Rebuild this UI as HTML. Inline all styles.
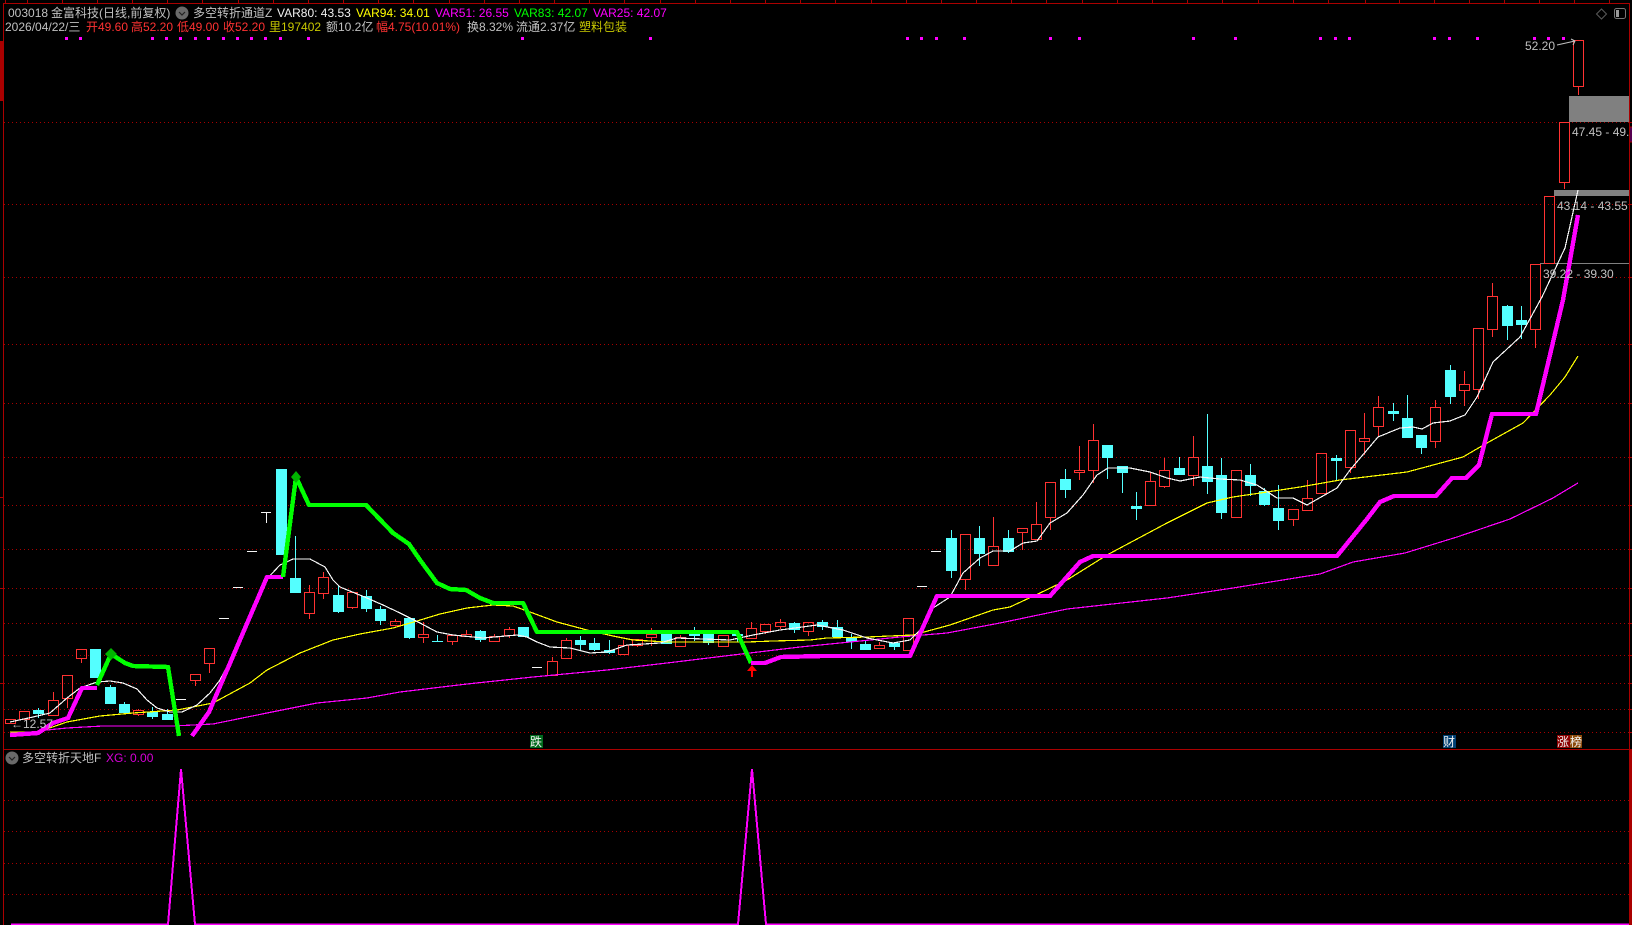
<!DOCTYPE html>
<html><head><meta charset="utf-8"><title>003018</title>
<style>
html,body{margin:0;padding:0;background:#000;overflow:hidden}
svg{display:block}
text{font-family:"Liberation Sans","WenQuanYi Zen Hei","Noto Sans CJK SC",sans-serif;font-size:12px;fill:#c0c0c0;white-space:pre}
.r{fill:#ff3232}.y{fill:#ffff00}.o{fill:#c8c800}.m{fill:#ff00ff}.g{fill:#00ff00}.w{fill:#f0f0f0}
</style></head><body>
<svg width="1632" height="925" viewBox="0 0 1632 925" xmlns="http://www.w3.org/2000/svg">
<rect width="1632" height="925" fill="#000"/>
<!-- grid -->
<path fill="none" stroke="#a80000" stroke-width="1" stroke-dasharray="1 3" shape-rendering="crispEdges" d="M4 122.5H1629M4 204.5H1629M4 277.5H1629M4 344.5H1629M4 403.5H1629M4 457.5H1629M4 505.5H1629M4 549.5H1629M4 588.5H1629M4 623.5H1629M4 655.5H1629M4 683.5H1629M4 709.5H1629M4 732.5H1629M4 800.5H1629M4 831.5H1629M4 863.5H1629M4 894.5H1629"/>
<!-- frame -->
<g fill="#aa0000" shape-rendering="crispEdges">
<rect x="3" y="3" width="1627" height="1"/>
<rect x="3" y="3" width="1" height="922"/>
<rect x="0" y="41" width="3" height="60"/>
<rect x="1629" y="3" width="1" height="746"/>
<rect x="1629" y="749" width="3" height="176"/>
<rect x="3" y="749" width="1629" height="1"/>
<rect x="1630" y="122" width="2" height="1"/><rect x="1630" y="204" width="2" height="1"/><rect x="1630" y="277" width="2" height="1"/><rect x="1630" y="344" width="2" height="1"/><rect x="1630" y="403" width="2" height="1"/><rect x="1630" y="457" width="2" height="1"/><rect x="1630" y="505" width="2" height="1"/><rect x="1630" y="549" width="2" height="1"/><rect x="1630" y="588" width="2" height="1"/><rect x="1630" y="623" width="2" height="1"/><rect x="1630" y="655" width="2" height="1"/><rect x="1630" y="683" width="2" height="1"/><rect x="1630" y="709" width="2" height="1"/><rect x="1630" y="732" width="2" height="1"/>
<rect x="0" y="497" width="3" height="1"/><rect x="0" y="588" width="3" height="1"/><rect x="0" y="683" width="3" height="1"/>
</g>
<path stroke="#aa0000" fill="none" shape-rendering="crispEdges" d="M5.5 0V3M27.5 0V3M62.5 0V3M97.5 0V3M132.5 0V3M167.5 0V3M202.5 0V3M238.5 0V3M273.5 0V3M308.5 0V3M343.5 0V3M378.5 0V3M413.5 0V3M449.5 0V3M484.5 0V3M519.5 0V3M554.5 0V3M589.5 0V3M624.5 0V3M660.5 0V3M695.5 0V3M730.5 0V3M765.5 0V3M800.5 0V3M835.5 0V3M871.5 0V3M906.5 0V3M941.5 0V3M976.5 0V3M1011.5 0V3M1046.5 0V3M1082.5 0V3M1117.5 0V3M1152.5 0V3M1187.5 0V3M1222.5 0V3M1258.5 0V3M1293.5 0V3M1328.5 0V3M1365.5 0V3M1399.5 0V3M1434.5 0V3M1469.5 0V3M1504.5 0V3M1539.5 0V3M1574.5 0V3M1609.5 0V3"/>
<rect x="1630" y="127" width="2" height="15" fill="#0000a0" stroke="#aa0000" stroke-width="1"/>
<!-- signal dots -->
<path fill="#ff00ff" shape-rendering="crispEdges" d="M65 37h3v3h-3zM79 37h3v3h-3zM151 37h3v3h-3zM165 37h3v3h-3zM179 37h3v3h-3zM194 37h3v3h-3zM207 37h3v3h-3zM222 37h3v3h-3zM236 37h3v3h-3zM250 37h3v3h-3zM264 37h3v3h-3zM279 37h3v3h-3zM307 37h3v3h-3zM521 37h3v3h-3zM649 37h3v3h-3zM906 37h3v3h-3zM920 37h3v3h-3zM935 37h3v3h-3zM963 37h3v3h-3zM1049 37h3v3h-3zM1078 37h3v3h-3zM1192 37h3v3h-3zM1234 37h3v3h-3zM1319 37h3v3h-3zM1334 37h3v3h-3zM1348 37h3v3h-3zM1433 37h3v3h-3zM1448 37h3v3h-3zM1476 37h3v3h-3zM1533 37h3v3h-3zM1547 37h3v3h-3zM1562 37h3v3h-3z"/>
<!-- gray zones -->
<g shape-rendering="crispEdges">
<rect x="1569" y="96" width="60" height="26" fill="#808080"/>
<rect x="1554" y="190" width="75" height="6" fill="#808080"/>
<rect x="1540" y="263" width="89" height="1" fill="#808080"/>
</g>
<!-- candles: cyan -->
<g shape-rendering="crispEdges">
<path fill="none" stroke="#54ffff" d="M38.5 708V718M110.5 685V690M124.5 702V714M152.5 707V719M167.5 709V716M295.5 536V580M338.5 586V613M366.5 590V612M380.5 606V625M409.5 620V639M437.5 635V642M432 641.5H443M480.5 630V642M580.5 636V650M594.5 638V651M609.5 640V654M694.5 627V641M708.5 640V645M737.5 634V642M794.5 622V633M822.5 620V630M837.5 620V630M851.5 634V649M865.5 641V646M894.5 642V650M951.5 530V578M979.5 526V566M1008.5 530V553M1065.5 469V498M1107.5 450V479M1122.5 470V493M1136.5 492V520M1179.5 457V470M1207.5 414V494M1221.5 458V519M1250.5 464V496M1264.5 488V506M1278.5 485V530M1336.5 455V480M1393.5 403V421M1407.5 395V420M1421.5 440V454M1450.5 365V404M1507.5 305V340M1521.5 306V339"/>
<path fill="#54ffff" d="M33 710h11v4h-11zM90 649h11v29h-11zM105 687h11v17h-11zM119 704h11v9h-11zM147 712h11v5h-11zM162 714h11v6h-11zM276 469h11v86h-11zM290 578h11v15h-11zM333 595h11v17h-11zM361 596h11v13h-11zM375 609h11v12h-11zM404 618h11v20h-11zM475 631h11v9h-11zM518 627h11v10h-11zM575 640h11v5h-11zM589 643h11v7h-11zM604 650h11v3h-11zM661 634h11v10h-11zM689 634h11v2h-11zM703 634h11v9h-11zM732 634h11v2h-11zM789 623h11v7h-11zM817 622h11v5h-11zM832 627h11v10h-11zM846 638h11v4h-11zM860 644h11v6h-11zM889 643h11v4h-11zM946 538h11v33h-11zM974 538h11v16h-11zM1003 538h11v14h-11zM1060 479h11v11h-11zM1102 445h11v13h-11zM1117 466h11v7h-11zM1131 506h11v3h-11zM1174 468h11v7h-11zM1202 466h11v16h-11zM1216 475h11v38h-11zM1245 475h11v11h-11zM1259 491h11v14h-11zM1273 508h11v13h-11zM1331 458h11v3h-11zM1388 411h11v3h-11zM1402 418h11v20h-11zM1416 435h11v13h-11zM1445 370h11v27h-11zM1502 306h11v20h-11zM1516 320h11v5h-11z"/>
<!-- candles: red -->
<path fill="none" stroke="#ff3232" d="M5.5 719.5h10V723.5h-10zM19.5 711.5h10V719.5h-10zM48.5 700.5h10V715.5h-10zM53.5 692V700M62.5 675.5h10V698.5h-10zM67.5 699V708M76.5 649.5h10V658.5h-10zM81.5 659V663M133.5 710.5h10V714.5h-10zM138.5 709V710M138.5 715V716M190.5 674.5h10V680.5h-10zM195.5 681V686M204.5 648.5h10V663.5h-10zM209.5 664V673M304.5 592.5h10V613.5h-10zM309.5 585V592M309.5 614V619M318.5 577.5h10V593.5h-10zM323.5 572V577M323.5 594V599M347.5 592.5h10V607.5h-10zM352.5 608V609M390.5 621.5h10V625.5h-10zM395.5 619V621M418.5 634.5h10V637.5h-10zM423.5 622V634M423.5 638V643M447.5 635.5h10V641.5h-10zM452.5 642V645M461.5 634.5h10V636.5h-10zM466.5 630V634M489.5 636.5h10V641.5h-10zM494.5 634V636M504.5 629.5h10V635.5h-10zM509.5 627V629M509.5 636V638M547.5 661.5h10V675.5h-10zM552.5 657V661M561.5 640.5h10V658.5h-10zM566.5 638V640M618.5 645.5h10V654.5h-10zM623.5 640V645M632.5 639.5h10V645.5h-10zM637.5 646V647M646.5 634.5h10V637.5h-10zM651.5 628V634M651.5 638V646M675.5 637.5h10V646.5h-10zM680.5 635V637M718.5 635.5h10V646.5h-10zM746.5 628.5h10V638.5h-10zM751.5 622V628M760.5 624.5h10V631.5h-10zM765.5 632V634M775.5 622.5h10V626.5h-10zM780.5 619V622M780.5 627V629M803.5 622.5h10V631.5h-10zM808.5 632V636M874.5 645.5h10V648.5h-10zM879.5 642V645M903.5 618.5h10V650.5h-10zM960.5 534.5h10V579.5h-10zM965.5 580V590M988.5 546.5h10V565.5h-10zM993.5 517V546M1017.5 528.5h10V532.5h-10zM1022.5 533V550M1031.5 524.5h10V539.5h-10zM1036.5 502V524M1045.5 482.5h10V517.5h-10zM1050.5 518V530M1074.5 470.5h10V472.5h-10zM1079.5 446V470M1079.5 473V480M1088.5 440.5h10V470.5h-10zM1093.5 424V440M1093.5 471V483M1145.5 481.5h10V505.5h-10zM1150.5 472V481M1159.5 470.5h10V486.5h-10zM1164.5 458V470M1164.5 487V488M1188.5 457.5h10V475.5h-10zM1193.5 436V457M1193.5 476V486M1231.5 470.5h10V517.5h-10zM1288.5 509.5h10V519.5h-10zM1293.5 520V526M1302.5 498.5h10V510.5h-10zM1307.5 480V498M1316.5 453.5h10V493.5h-10zM1345.5 430.5h10V467.5h-10zM1350.5 468V473M1359.5 438.5h10V441.5h-10zM1364.5 413V438M1364.5 442V455M1373.5 407.5h10V426.5h-10zM1378.5 396V407M1378.5 427V437M1430.5 407.5h10V441.5h-10zM1435.5 400V407M1435.5 442V448M1459.5 384.5h10V390.5h-10zM1464.5 371V384M1464.5 391V406M1473.5 328.5h10V389.5h-10zM1478.5 390V399M1487.5 296.5h10V329.5h-10zM1492.5 283V296M1492.5 330V337M1530.5 264.5h10V329.5h-10zM1535.5 330V348M1544.5 196.5h10V263.5h-10zM1559.5 122.5h10V182.5h-10zM1564.5 183V189M1573.5 40.5h10V86.5h-10zM1578.5 87V95"/>
<!-- white doji dashes -->
<path fill="none" stroke="#f4f4f4" d="M176 699.5H186M219 618.5H229M233 587.5H243M247 551.5H257M261 512.5H271M266.5 512V523M532 667.5H542M917 586.5H927M931 551.5H941"/>
</g>
<!-- moving averages -->
<g fill="none" stroke-width="1.2" shape-rendering="crispEdges">
<polyline stroke="#ff00ff" points="37,731 67,728 103,726 173,726 213,724 267,713 317,703 367,698 400,692 467,684 533,677 607,670 667,663 733,655 800,647 900,637 947,633 1000,623 1067,609 1167,598 1233,588 1320,574 1353,562 1405,553 1457,537 1510,519 1553,498 1578,483"/>
<polyline stroke="#ffff00" points="10,732 38,732 67,722 100,716 133,713 177,710 213,703 250,683 267,670 300,653 333,640 360,634 393,628 417,621 440,614 467,608 493,605 513,606 530,612 557,622 587,630 613,636 633,640 667,642 747,642 773,641 810,640 827,638 867,637 913,635 950,625 993,610 1010,607 1040,593 1067,580 1107,555 1167,523 1207,503 1233,497 1267,492 1300,487 1340,480 1407,472 1463,457 1487,443 1523,423 1550,395 1565,377 1578,356"/>
<polyline stroke="#f4f4f4" points="10,722 33,717 50,713 67,698 80,688 97,682 110,681 123,683 137,689 147,700 157,708 170,712 182,712 197,705 210,693 220,680 237,647 250,620 263,583 280,565 293,559 310,559 325,567 333,580 340,587 367,598 383,605 400,613 420,623 437,632 453,635 483,638 517,635 527,637 537,642 550,647 570,648 590,653 607,652 627,645 660,643 677,638 730,640 753,635 780,630 817,625 843,630 867,638 893,643 910,640 920,630 933,608 950,597 963,573 980,558 993,551 1010,551 1023,543 1037,541 1050,523 1067,513 1083,495 1097,475 1108,468 1130,468 1150,472 1167,478 1180,481 1200,477 1220,479 1240,480 1257,485 1277,498 1293,498 1307,505 1337,488 1350,470 1378,437 1400,428 1413,427 1422,429 1433,423 1450,421 1465,415 1477,397 1493,362 1520,337 1542,297 1565,248 1578,190"/>
</g>
<!-- thick trend lines -->
<g fill="none" stroke-width="4.4" stroke-linejoin="round" shape-rendering="crispEdges">
<polyline stroke="#ff00ff" points="10,735 38,733 53,723 68,718 82,688 97,688"/>
<polyline stroke="#00ff00" points="97,685 111,654 125,663 133,666 168,667 179,736"/>
<polyline stroke="#ff00ff" points="192,736 209,712 267,577 283,577"/>
<polyline stroke="#00ff00" points="283,577 296,477 309,505 366,505 393,533 409,544 420,560 437,583 450,589 466,590 480,598 493,603 523,603 537,632 737,632 751,663"/>
<polyline stroke="#ff00ff" points="751,663 765,663 781,657 822,656 910,656 937,596 1050,596 1080,562 1093,556 1337,556 1367,519 1380,502 1394,496 1436,496 1452,478 1466,478 1479,465 1492,414 1536,414 1563,300 1578,215"/>
</g>
<path fill="#00b400" d="M111 648l6 6-6 6-6-6zM296 471l5 6-5 6-5-6z"/>
<!-- red arrow -->
<path fill="#ff0000" d="M752 665l5 6h-4v6h-2v-6h-4z"/>
<!-- labels -->
<text x="11" y="728">←12.57</text>
<path fill="none" stroke="#c0c0c0" d="M1557 45L1575 41M1571 39l4 2-2 4"/>
<text x="1525" y="50">52.20</text>
<text x="1572" y="136">47.45 - 49.</text>
<text x="1557" y="210">43.14 - 43.55</text>
<text x="1543" y="278">39.22 - 39.30</text>
<!-- tags -->
<g shape-rendering="crispEdges">
<rect x="530" y="735" width="13" height="13" fill="#006a1c"/>
<rect x="1443" y="735" width="13" height="13" fill="#003f73"/>
<rect x="1557" y="735" width="13" height="13" fill="#8c0000"/>
<rect x="1570" y="735" width="12" height="13" fill="#8c4a0a"/>
</g>
<text class="w" x="530" y="746">跌</text>
<text class="w" x="1443" y="746">财</text>
<text class="w" x="1557" y="746">涨</text>
<text class="w" x="1570" y="746">榜</text>
<!-- header row 1 -->
<text x="8" y="17">003018</text>
<text x="51" y="17">金富科技(日线,前复权)</text>
<circle cx="182" cy="13" r="6.5" fill="#6a6a6a"/><path d="M179 12l3 3 3-3" fill="none" stroke="#222" stroke-width="1.2"/>
<text x="193" y="17">多空转折通道Z</text>
<text class="w" x="277" y="17">VAR80: 43.53</text>
<text class="y" x="356" y="17">VAR94: 34.01</text>
<text class="m" x="435" y="17">VAR51: 26.55</text>
<text class="g" x="514" y="17">VAR83: 42.07</text>
<text class="m" x="593" y="17">VAR25: 42.07</text>
<!-- header row 2 -->
<text x="5" y="31">2026/04/22/三</text>
<text class="r" x="86" y="31">开49.60</text>
<text class="r" x="131" y="31">高52.20</text>
<text class="r" x="177" y="31">低49.00</text>
<text class="r" x="223" y="31">收52.20</text>
<text class="o" x="269" y="31">里197402</text>
<text x="326" y="31">额10.2亿</text>
<text class="r" x="376" y="31">幅4.75(10.01%)</text>
<text x="467" y="31">换8.32%</text>
<text x="516" y="31">流通2.37亿</text>
<text class="o" x="579" y="31">塑料包装</text>
<!-- top-right icons -->
<path d="M1601.5 9l5 5-5 5-5-5z" fill="none" stroke="#5a5a5a"/>
<rect x="1614.5" y="8.5" width="11" height="10" rx="2" fill="none" stroke="#777"/>
<rect x="1616" y="10" width="3" height="7" fill="#999"/>
<!-- lower panel -->
<circle cx="12" cy="758" r="6.5" fill="#6a6a6a"/><path d="M9 757l3 3 3-3" fill="none" stroke="#222" stroke-width="1.2"/>
<text x="22" y="762">多空转折天地F</text>
<text x="106" y="762" style="fill:#d800d8">XG: 0.00</text>
<path fill="none" stroke="#ff00ff" stroke-width="2" shape-rendering="crispEdges" d="M11 924.4H168L181 769L195 924.4H738L752 769L766 924.4H1629"/>
</svg>
</body></html>
